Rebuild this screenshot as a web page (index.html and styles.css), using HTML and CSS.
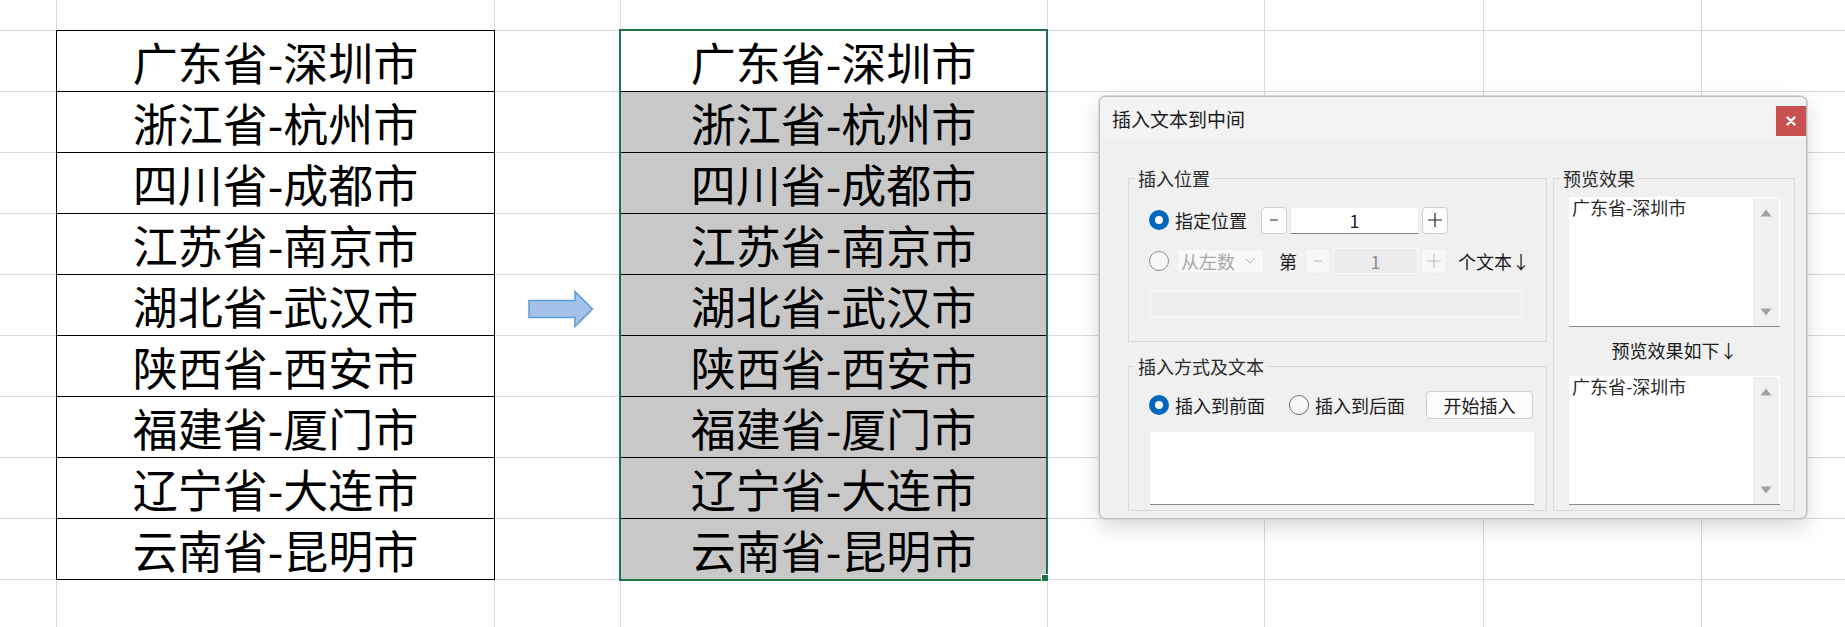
FILE: index.html
```html
<!DOCTYPE html>
<html>
<head>
    <title>插入文本到中间</title>
    <meta charset="UTF-8">
    <link rel="stylesheet" href="styles.css">
</head>
<body>
<div class="sheet">
    <div class="col col-a"></div>

    <div class="col col-b">
        <div class="range">
            <div class="cell">广东省-深圳市</div>
            <div class="cell">浙江省-杭州市</div>
            <div class="cell">四川省-成都市</div>
            <div class="cell">江苏省-南京市</div>
            <div class="cell">湖北省-武汉市</div>
            <div class="cell">陕西省-西安市</div>
            <div class="cell">福建省-厦门市</div>
            <div class="cell">辽宁省-大连市</div>
            <div class="cell">云南省-昆明市</div>
        </div>
    </div>

    <div class="col col-c">
        <svg class="arrow" width="66" height="38" viewBox="0 0 66 38">
            <path d="M1 10.5 H47 V1.5 L64.5 19 L47 36.5 V27.5 H1 Z" fill="#a4c2e9" stroke="#5b9bd5" stroke-width="1.5"/>
        </svg>
    </div>

    <div class="col col-d">
        <div class="range selected">
            <div class="cell first">广东省-深圳市</div>
            <div class="cell">浙江省-杭州市</div>
            <div class="cell">四川省-成都市</div>
            <div class="cell">江苏省-南京市</div>
            <div class="cell">湖北省-武汉市</div>
            <div class="cell">陕西省-西安市</div>
            <div class="cell">福建省-厦门市</div>
            <div class="cell">辽宁省-大连市</div>
            <div class="cell last">云南省-昆明市</div>
            <span class="fill-handle"></span>
        </div>
    </div>

    <div class="col col-e"></div>
    <div class="col col-f"></div>
    <div class="col col-g"></div>
    <div class="col col-h"></div>

    <div class="dialog">
        <div class="titlebar">
            <span class="title">插入文本到中间</span>
            <button class="close">
                <svg width="10" height="10" viewBox="0 0 10 10">
                    <path d="M1.5 1.5 L8.5 8.5 M8.5 1.5 L1.5 8.5" stroke="#fff" stroke-width="2.4" stroke-linecap="round"/>
                </svg>
            </button>
        </div>

        <div class="dialog-body">
            <div class="left-col">
                <fieldset class="group group-pos">
                    <legend>插入位置</legend>
                    <div class="group-inner">
                        <div class="row row-1">
                            <span class="radio on"></span>
                            <span class="label">指定位置</span>
                            <div class="spinner">
                                <span class="spin-btn">
                                    <svg width="12" height="12" viewBox="0 0 12 12"><path d="M2 6 H10" stroke="#222" stroke-width="1.2"/></svg>
                                </span>
                                <span class="spin-input">1</span>
                                <span class="spin-btn">
                                    <svg width="14" height="14" viewBox="0 0 14 14"><path d="M0 7 H14 M7 0 V14" stroke="#222" stroke-width="1.2"/></svg>
                                </span>
                            </div>
                        </div>

                        <div class="row row-2">
                            <span class="radio off"></span>
                            <span class="combo">从左数
                                <svg width="10" height="6" viewBox="0 0 10 6"><path d="M0.5 0.5 L5 5 L9.5 0.5" fill="none" stroke="#b0b0b0" stroke-width="1"/></svg>
                            </span>
                            <span class="label nth">第</span>
                            <div class="spinner disabled">
                                <span class="spin-btn">
                                    <svg width="12" height="12" viewBox="0 0 12 12"><path d="M2 6 H10" stroke="#c4c4c4" stroke-width="1.2"/></svg>
                                </span>
                                <span class="spin-input">1</span>
                                <span class="spin-btn">
                                    <svg width="14" height="14" viewBox="0 0 14 14"><path d="M0 7 H14 M7 0 V14" stroke="#c4c4c4" stroke-width="1.2"/></svg>
                                </span>
                            </div>
                            <span class="label unit">个文本↓</span>
                        </div>

                        <div class="bar"></div>
                    </div>
                </fieldset>

                <fieldset class="group group-mode">
                    <legend>插入方式及文本</legend>
                    <div class="group-inner">
                        <div class="row row-mode">
                            <span class="radio on"></span>
                            <span class="label">插入到前面</span>
                            <span class="radio off second"></span>
                            <span class="label">插入到后面</span>
                            <button class="btn">开始插入</button>
                        </div>
                        <div class="text-input"></div>
                    </div>
                </fieldset>
            </div>

            <fieldset class="group group-preview">
                <legend>预览效果</legend>
                <div class="group-inner">
                    <div class="memo memo-1">
                        <div class="memo-text">广东省-深圳市</div>
                        <div class="memo-scroll">
                            <svg width="12" height="8" viewBox="0 0 12 8"><path d="M0.5 7.5 L6 0.5 L11.5 7.5 Z" fill="#a2a2a2"/></svg>
                            <svg width="12" height="8" viewBox="0 0 12 8"><path d="M0.5 0.5 L6 7.5 L11.5 0.5 Z" fill="#a2a2a2"/></svg>
                        </div>
                    </div>
                    <div class="preview-caption">预览效果如下↓</div>
                    <div class="memo memo-2">
                        <div class="memo-text">广东省-深圳市</div>
                        <div class="memo-scroll">
                            <svg width="12" height="8" viewBox="0 0 12 8"><path d="M0.5 7.5 L6 0.5 L11.5 7.5 Z" fill="#a2a2a2"/></svg>
                            <svg width="12" height="8" viewBox="0 0 12 8"><path d="M0.5 0.5 L6 7.5 L11.5 0.5 Z" fill="#a2a2a2"/></svg>
                        </div>
                    </div>
                </div>
            </fieldset>
        </div>
    </div>
</div>
</body>
</html>
```

FILE: styles.css
```css
body {
    margin: 0;
    font-family: "Noto Sans CJK SC", "Microsoft YaHei", sans-serif;
    background: #fff;
}
.sheet {
    position: relative;
    display: flex;
    height: 627px;
    overflow: hidden;
    background-color: #fff;
    background-image: linear-gradient(#dadada 1px, transparent 1px);
    background-size: 100% 61px;
    background-position: 0 30px;
}
.col {
    flex: none;
    box-sizing: border-box;
    border-right: 1px solid #dadada;
}
.col-a { width: 57px; }
.col-b { width: 438px; }
.col-c { width: 126px; }
.col-d { width: 427px; }
.col-e { width: 217px; }
.col-f { width: 219px; }
.col-g { width: 218px; }
.col-h { flex: 1; border-right: none; }

/* cell ranges */
.range {
    box-sizing: border-box;
    width: 439px;
    margin: 30px 0 0 -1px;
    border: 1px solid #000;
    border-bottom: none;
}
.cell {
    box-sizing: border-box;
    height: 61px;
    border-bottom: 1px solid #000;
    display: flex;
    align-items: center;
    justify-content: center;
    font-size: 45px;
    line-height: 1;
    color: #000;
    background: #fff;
}
.range.selected {
    position: relative;
    width: 429px;
    margin: 29px 0 0 -2px;
    border: 2px solid #217346;
}
.range.selected .cell {
    background: #c8c8c8;
}
.range.selected .cell.first {
    background: #fff;
}
.range.selected .cell.last {
    height: 60px;
    border-bottom: none;
}
.fill-handle {
    position: absolute;
    right: -3px;
    bottom: -3px;
    width: 6px;
    height: 6px;
    background: #217346;
    border: 1px solid #fff;
}
.arrow {
    display: block;
    margin: 290px 0 0 33px;
}

/* dialog */
.dialog {
    position: absolute;
    left: 1099px;
    top: 96px;
    width: 708px;
    height: 423px;
    box-sizing: border-box;
    display: flex;
    flex-direction: column;
    border: 1px solid #bcbcbc;
    border-radius: 7px;
    background: #f0f0f0;
    box-shadow: 0 0 0 1px #d6d6d6, 0 8px 22px rgba(0, 0, 0, 0.16);
    overflow: hidden;
    color: #1b1b1b;
}
.titlebar {
    flex: none;
    height: 43px;
    display: flex;
    align-items: center;
    padding-left: 12px;
    background: #f3f3f3;
}
.title {
    font-size: 19px;
}
.close {
    margin-left: auto;
    align-self: flex-start;
    margin-top: 9px;
    width: 30px;
    height: 30px;
    padding: 0;
    border: none;
    background: #c75050;
    display: flex;
    align-items: center;
    justify-content: center;
}
.dialog-body {
    flex: 1;
    display: flex;
    gap: 6px;
    padding: 28px 11px 7px 28px;
}
.left-col {
    width: 419px;
    display: flex;
    flex-direction: column;
    gap: 14px;
}
.group {
    box-sizing: border-box;
    margin: 0;
    padding: 0;
    min-width: 0;
    border: 1px solid #d8d8d8;
}
.group legend {
    margin-left: 6px;
    padding: 0 3px;
    font-size: 18px;
    line-height: 20px;
    color: #2b2b2b;
}
.group-pos { height: 174px; }
.group-mode { height: 155px; }
.group-preview { width: 242px; height: 343px; }

.group-pos .group-inner {
    padding: 18px 0 0 20px;
}
.group-mode .group-inner {
    padding: 15px 0 0 20px;
}
.group-preview .group-inner {
    padding: 9px 0 0 15px;
}
.row {
    display: flex;
    align-items: center;
}
.row-1 { height: 28px; }
.row-2 { height: 27px; margin-top: 13px; }
.row-mode { height: 28px; }
.label {
    font-size: 18px;
    line-height: 20px;
    white-space: nowrap;
}
.radio {
    box-sizing: border-box;
    width: 20px;
    height: 20px;
    margin-right: 6px;
    border-radius: 50%;
    display: flex;
    align-items: center;
    justify-content: center;
    flex: none;
}
.radio.on {
    background: #0067c0;
}
.radio.on::after {
    content: "";
    width: 8px;
    height: 8px;
    border-radius: 50%;
    background: #fff;
}
.radio.off {
    border: 1px solid #6e6e6e;
    background: #f7f7f7;
}
.row-2 .radio.off {
    border-color: #8a8a8a;
}
.radio.second {
    margin-left: 24px;
}

/* spinners */
.spinner {
    display: flex;
    gap: 3px;
    margin-left: 14px;
}
.spin-btn {
    box-sizing: border-box;
    width: 26px;
    height: 27px;
    display: flex;
    align-items: center;
    justify-content: center;
    background: #fdfdfd;
    border: 1px solid #cfcfcf;
    border-radius: 4px;
}
.spin-input {
    box-sizing: border-box;
    width: 129px;
    height: 27px;
    display: flex;
    align-items: center;
    justify-content: center;
    background: #fff;
    border: 1px solid #ececec;
    border-bottom: 1px solid #858585;
    border-radius: 3px 3px 0 0;
    font-size: 18px;
    color: #1b1b1b;
}
.spinner.disabled {
    margin-left: 8px;
}
.spinner.disabled .spin-btn {
    height: 26px;
    background: #f7f7f7;
    border-color: #ededed;
}
.spinner.disabled .spin-btn:first-child {
    width: 25px;
}
.spinner.disabled .spin-input {
    width: 85px;
    height: 26px;
    background: #ececec;
    border: 1px solid #f9f9f9;
    border-radius: 2px;
    color: #8c8c8c;
}
.combo {
    box-sizing: border-box;
    width: 87px;
    height: 24px;
    margin-left: 2px;
    padding: 0 8px 0 3px;
    display: flex;
    align-items: center;
    justify-content: space-between;
    background: #f9f9f9;
    border: 1px solid #efefef;
    border-radius: 3px;
    font-size: 18px;
    color: #a8a8a8;
}
.label.nth { margin-left: 15px; }
.label.unit { margin-left: 11px; }
.bar {
    box-sizing: border-box;
    width: 372px;
    height: 26px;
    margin: 17px 0 0 1px;
    background: #eeeeee;
    border: 1px solid #fbfbfb;
}

/* insert mode */
.btn {
    box-sizing: border-box;
    width: 107px;
    height: 28px;
    margin-left: 21px;
    padding: 0;
    background: #fdfdfd;
    border: 1px solid #d0d0d0;
    border-radius: 4px;
    font-family: inherit;
    font-size: 18px;
    color: #1b1b1b;
}
.text-input {
    box-sizing: border-box;
    width: 384px;
    height: 73px;
    margin: 13px 0 0 1px;
    background: #fff;
    border-bottom: 1px solid #8a8a8a;
}

/* preview */
.memo {
    box-sizing: border-box;
    width: 211px;
    display: flex;
    background: #fff;
    border-bottom: 1px solid #8a8a8a;
}
.memo-1 { height: 130px; }
.memo-2 { height: 129px; margin-top: 16px; }
.memo-text {
    flex: 1;
    padding-left: 3px;
    font-size: 18px;
    line-height: 20px;
    color: #2a2a2a;
}
.memo-scroll {
    box-sizing: border-box;
    width: 26px;
    margin: 1px 1px 0 0;
    padding: 11px 0 10px;
    display: flex;
    flex-direction: column;
    justify-content: space-between;
    align-items: center;
    background: #f0f0f0;
}
.preview-caption {
    width: 211px;
    margin-top: 13px;
    text-align: center;
    font-size: 18px;
    line-height: 20px;
}
```
